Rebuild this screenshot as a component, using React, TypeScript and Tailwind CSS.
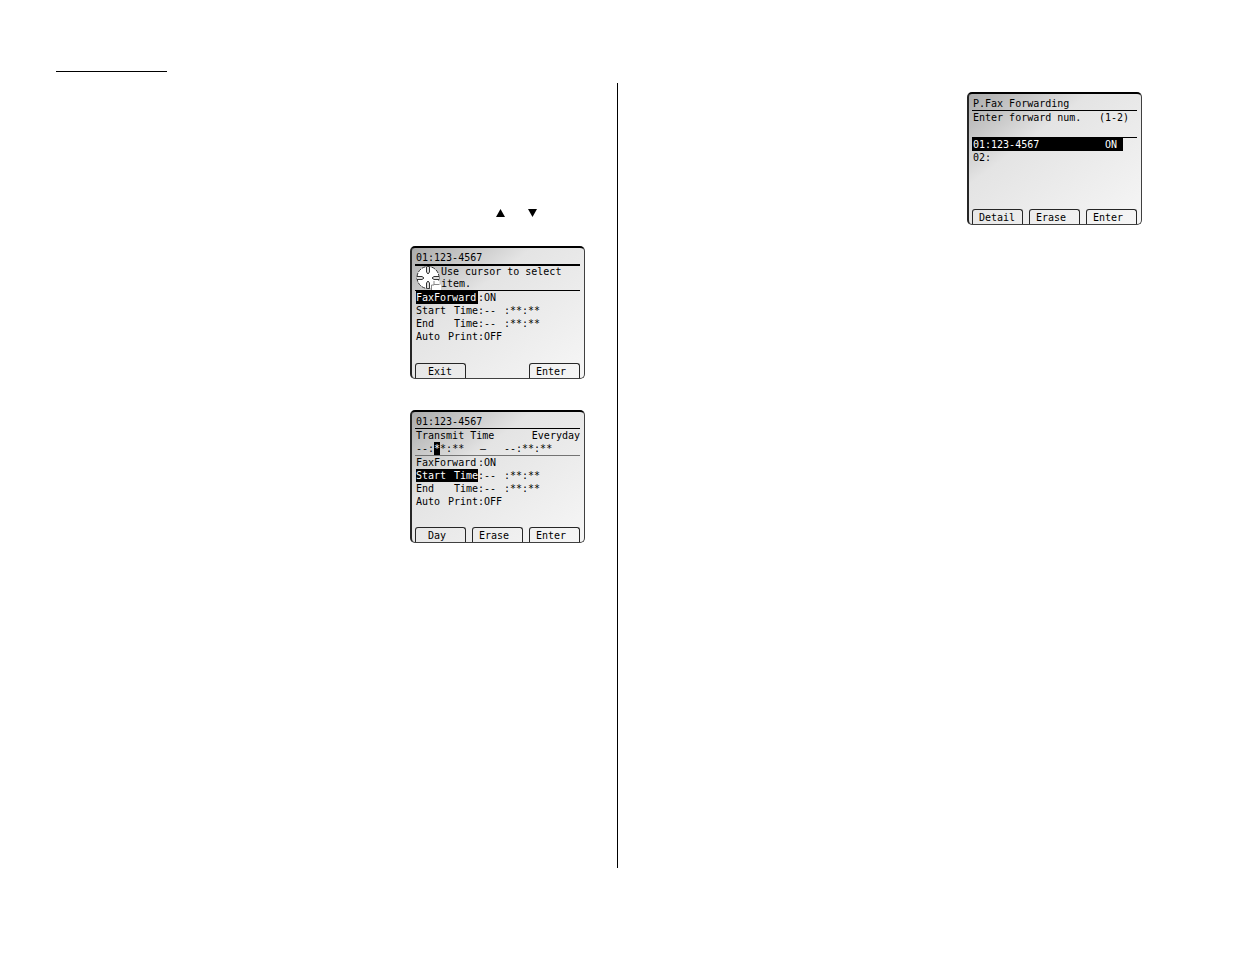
import { JSX, ReactNode } from "react";
import clsx from "clsx";

interface ScreenProps {
    title: string;
    thick?: boolean;
    keys: (string | null)[];
    children: ReactNode;
}

interface SettingProps {
    label: string[];
    value: string;
    time?: string;
    selected?: boolean;
}

const CursorPad = (): JSX.Element => (
    <svg width="25" height="24" viewBox="0 0 25 24" className="shrink-0" aria-hidden="true">
        <circle cx="12" cy="11.5" r="11" fill="#fff" stroke="#333" strokeWidth="1" strokeDasharray="4 1" />
        <g fill="#ddd" stroke="#333" strokeWidth="1">
            <path d="M10.5 1v5l1.5 2 1.5-2V1" />
            <path d="M10.5 22v-5l1.5-2 1.5 2v5" />
            <path d="M1 10.5h5l2 1.5-2 1.5H1" />
            <path d="M23 10.5h-5L16 12l2 1.5h5" />
        </g>
        <path d="M15.5 24v-5l2-1v-3.500h6v3.500l1.500 1v5z" fill="#fff" />
        <path d="M15.500 24v-5h2.500v-4" fill="none" stroke="#888" strokeWidth="1" />
        <path d="M18 18.500h5.500" stroke="#888" strokeWidth="1" />
    </svg>
);

const Screen = ({ title, thick, keys, children }: ScreenProps): JSX.Element => (
    <article className="flex h-[133px] w-[175px] flex-col rounded-[5px] border-t-2 border-r border-b border-l-2 border-t-black border-r-neutral-700 border-b-neutral-700 border-l-neutral-800 bg-linear-to-br from-[#ababab] via-[#e4e4e4] via-35% to-[#f6f6f6] pt-[3px] pr-1 pl-[3px]">
        <h2 className={clsx("border-black pl-px", thick ? "border-b-2" : "border-b")}>{title}</h2>
        {children}
        <div className="mt-auto grid grid-cols-3 gap-1.5">
            {keys.map((key, index) =>
                key ? (
                    <button
                        key={index}
                        className="h-[15px] rounded-t-[3px] border border-b-0 border-neutral-800 pl-1.5 text-left whitespace-pre"
                    >
                        {key}
                    </button>
                ) : (
                    <span key={index} />
                ),
            )}
        </div>
    </article>
);

const Setting = ({ label, value, time, selected }: SettingProps): JSX.Element => (
    <div className="flex pl-px">
        <dt className={clsx("flex w-[62px] justify-between", selected && "bg-black text-white")}>
            {label.map((word) => (
                <span key={word}>{word}</span>
            ))}
        </dt>
        <dd className="flex">
            <span className="w-[26px]">:{value}</span>
            {time && <span>{time}</span>}
        </dd>
    </div>
);

const Settings = ({ selected }: { selected: "forward" | "start" }): JSX.Element => (
    <dl>
        <Setting label={["FaxForward"]} value="ON" selected={selected === "forward"} />
        <Setting label={["Start", "Time"]} value="--" time=":**:**" selected={selected === "start"} />
        <Setting label={["End", "Time"]} value="--" time=":**:**" />
        <Setting label={["Auto", "Print"]} value="OFF" />
    </dl>
);

const App = (): JSX.Element => {
    return (
        <main className="flex min-h-screen flex-col bg-white pt-[71px] pr-[55px] pb-[86px] pl-14 font-['DejaVu_Sans_Mono',monospace] text-[10px] leading-[13px] text-black">
            <hr className="w-[111px] border-black" />
            <div className="mt-[11px] grid flex-1 grid-cols-2">
                <section className="flex flex-col items-end border-r border-black pt-[126px] pr-8">
                    <div className="mr-12 flex gap-[23px]">
                        <svg width="9" height="8" viewBox="0 0 9 8" aria-label="Up">
                            <path d="M4.500 0L9 8H0z" />
                        </svg>
                        <svg width="9" height="8" viewBox="0 0 9 8" aria-label="Down">
                            <path d="M0 0h9L4.500 8z" />
                        </svg>
                    </div>
                    <div className="mt-[29px] flex flex-col gap-[31px]">
                        <Screen title="01:123-4567" thick keys={[" Exit", null, "Enter"]}>
                            <div className="flex border-b border-black pl-px leading-3">
                                <CursorPad />
                                <p>
                                    Use cursor to select
                                    <br />
                                    item.
                                </p>
                            </div>
                            <Settings selected="forward" />
                        </Screen>
                        <Screen title="01:123-4567" keys={[" Day", "Erase", "Enter"]}>
                            <div className="border-b border-neutral-500 pl-px">
                                <p className="flex justify-between">
                                    <span>Transmit Time</span>
                                    <span>Everyday</span>
                                </p>
                                <p className="grid grid-cols-[64px_24px_auto]">
                                    <span className="flex">
                                        --:<mark className="bg-black text-white">*</mark>*:**
                                    </span>
                                    <span>—</span>
                                    <span>--:**:**</span>
                                </p>
                            </div>
                            <Settings selected="start" />
                        </Screen>
                    </div>
                </section>
                <section className="flex flex-col items-end pt-[9px] pr-[38px]">
                    <Screen title="P.Fax Forwarding" keys={["Detail", "Erase", "Enter"]}>
                        <p className="flex justify-between border-b border-black pr-2 pb-[13px] pl-px">
                            <span>Enter forward num.</span>
                            <span>(1-2)</span>
                        </p>
                        <ul className="w-[151px]">
                            <li className="flex justify-between bg-black pr-1.5 pl-px text-white">
                                <span>01:123-4567</span>
                                <span>ON</span>
                            </li>
                            <li className="pl-px">02:</li>
                        </ul>
                    </Screen>
                </section>
            </div>
        </main>
    );
};

export default App;
